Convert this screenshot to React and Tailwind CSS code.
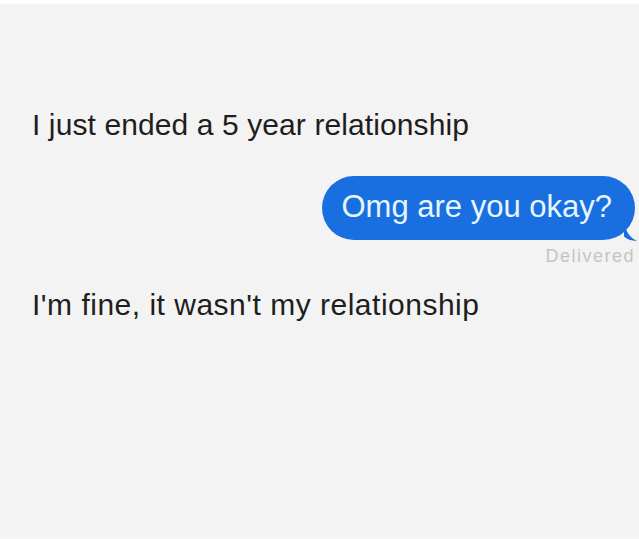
import React from "react";

const messages = [
  { id: 1, from: "them", text: "I just ended a 5 year relationship" },
  { id: 2, from: "me", text: "Omg are you okay?", status: "Delivered" },
  { id: 3, from: "them", text: "I'm fine, it wasn't my relationship" },
];

const Bubble = ({ text }) => (
  <div className="relative">
    <div className="bg-[#1a6fe0] rounded-[32px] h-[64px] pl-[19px] pr-[23px] flex items-center">
      <span className="text-[#e6f6ff] text-[31px] leading-[36px] -mt-[3px]">{text}</span>
    </div>
    {/* little tail on the bottom right */}
    <svg
      className="absolute right-[-3px] bottom-[-1px]"
      width="14"
      height="16"
      viewBox="0 0 16 18"
    >
      <path d="M0 0 C4 8 6 14 15 18 C8 18 3 16 0 13 Z" fill="#1a6fe0" />
    </svg>
  </div>
);

export default function App() {
  return (
    <div
      className="w-[639px] h-[539px] bg-[#f3f3f3] border-t-4 border-t-white border-b-2 border-b-[#f7f7f7] overflow-hidden"
      style={{ fontFamily: "'Liberation Sans', Arial, sans-serif" }}
    >
      <div className="flex flex-col pt-[105px]">
        {messages.map((m) =>
          m.from === "them" ? (
            <p
              key={m.id}
              className={`pl-[32px] text-[30px] text-[#1e1e1e] leading-[32px] ${
                m.id === 3 ? "mt-[23px] tracking-[0.5px]" : "tracking-[0.1px]"
              }`}
            >
              {m.text}
            </p>
          ) : (
            <div key={m.id} className="flex flex-col items-end pr-[4px] mt-[35px]">
              <Bubble text={m.text} />
              <span className="text-[18px] leading-[20px] text-[#c4c4c4] mt-[6px] tracking-[1.5px]">
                {m.status}
              </span>
            </div>
          )
        )}
      </div>
    </div>
  );
}
